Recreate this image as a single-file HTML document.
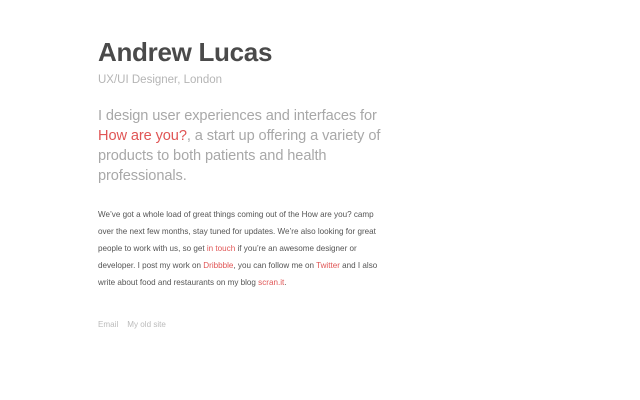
<!DOCTYPE html>
<html><head><meta charset="utf-8"><style>
body{margin:0;background:#fff;font-family:"Liberation Sans",sans-serif;}
.w{position:absolute;left:98px;top:0;width:290px;}
h1{position:absolute;top:37px;left:0;margin:0;font-size:26px;font-weight:bold;color:#4a4a4a;white-space:nowrap;letter-spacing:-0.3px}
.sub{position:absolute;top:74px;left:0;font-size:11.5px;color:#b5b5b5;white-space:nowrap}
.lead{position:absolute;top:106px;left:0;width:285px;font-size:14.6px;line-height:20px;color:#a8a8a8;letter-spacing:-0.1px}
.body{position:absolute;top:206px;left:0;width:282px;font-size:8.1px;line-height:17px;color:#555}
a{color:#e05555;text-decoration:none}
.f{position:absolute;top:320px;left:0;font-size:8.1px;color:#bbb;white-space:nowrap}
</style></head><body><div class="w">
<h1>Andrew Lucas</h1>
<div class="sub">UX/UI Designer, London</div>
<div class="lead">I design user experiences and interfaces for <a>How are you?</a>, a start up offering a variety of products to both patients and health professionals.</div>
<div class="body">We’ve got a whole load of great things coming out of the How are you? camp over the next few months, stay tuned for updates. We’re also looking for great people to work with us, so get <a>in touch</a> if you’re an awesome designer or developer. I post my work on <a>Dribbble</a>, you can follow me on <a>Twitter</a> and I also write about food and restaurants on my blog <a>scran.it</a>.</div>
<div class="f">Email &nbsp;&nbsp;&nbsp;My old site</div>
</div></body></html>
